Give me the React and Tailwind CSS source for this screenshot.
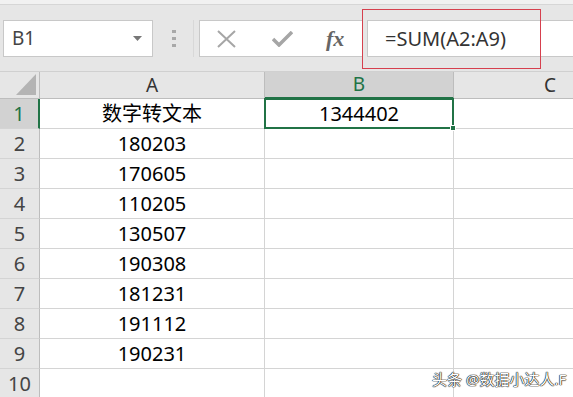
import React from 'react';

const rows = [
  '数字转文本', '180203', '170605', '110205', '130507',
  '190308', '181231', '191112', '190231', '',
];

const font = { fontFamily: '"Noto Sans", "Noto Sans CJK SC", sans-serif' };

const App = () => {
  return (
    <div className="relative w-[573px] h-[397px] overflow-hidden bg-white" style={font}>
      {/* Formula bar */}
      <div className="h-[72px] bg-[#e6e6e6] border-b border-[#d0d0d0]">
        <div className="h-[5px] bg-[#f1f1f1] border-b border-[#d6d6d6]" />
        <div className="flex items-stretch h-[37px] mt-[15px]">
          <div className="ml-[3px] w-[150px] bg-white border border-[#c8c8c8] flex items-center justify-between pl-[8px] pr-[10px]">
            <span className="text-[19px] text-[#444]">B1</span>
            <svg width="9" height="5" viewBox="0 0 9 5"><path d="M0 0h9L4.5 5z" fill="#777" /></svg>
          </div>
          <div className="w-[46px] flex items-center">
            <div className="ml-[19px] flex flex-col gap-[4px]">
              <div className="w-[4px] h-[3px] bg-[#a8a8a8]" />
              <div className="w-[4px] h-[3px] bg-[#a8a8a8]" />
              <div className="w-[4px] h-[3px] bg-[#a8a8a8]" />
            </div>
            <div className="ml-auto mr-[5px] w-px h-[37px] bg-[#d8d8d8]" />
          </div>
          <div className="w-[164px] bg-white border border-[#c8c8c8] flex items-center">
            <svg className="ml-[17px]" width="19" height="18" viewBox="0 0 19 18">
              <path d="M1 1L18 17M18 1L1 17" stroke="#a6a6a6" strokeWidth="2" />
            </svg>
            <svg className="ml-[36px]" width="21" height="16" viewBox="0 0 21 16">
              <path d="M1 8l6 6L20 1" stroke="#a6a6a6" strokeWidth="3.5" fill="none" />
            </svg>
            <span
              className="ml-[33px] text-[22px] italic font-bold text-[#666] leading-none"
              style={{ fontFamily: '"Liberation Serif", "DejaVu Serif", serif' }}
            >
              fx
            </span>
          </div>
          <div className="ml-[4px] flex-1 bg-white border border-[#c8c8c8] border-r-0 flex items-center pl-[17px]">
            <span className="text-[20px] text-[#333]">=SUM(A2:A9)</span>
          </div>
        </div>
      </div>

      {/* Sheet grid */}
      <div className="grid grid-cols-[40px_225px_189px_1fr] grid-rows-[27px_repeat(10,30px)]">
        <div className="bg-[#e6e6e6] border-r border-b border-[#bdbdbd] flex items-end justify-end pr-[3px] pb-[3px]">
          <svg width="20" height="21" viewBox="0 0 20 21"><path d="M20 0V21H0z" fill="#b4b4b4" /></svg>
        </div>
        <div className="bg-[#e6e6e6] border-r border-b border-[#bdbdbd] flex items-center justify-center text-[19px] text-[#333]">A</div>
        <div className="bg-[#d2d2d2] border-r border-[#bdbdbd] border-b-2 border-b-[#217346] flex items-center justify-center text-[19px] text-[#217346]">B</div>
        <div className="bg-[#e6e6e6] border-b border-[#bdbdbd] flex items-center justify-end pr-[17px] text-[19px] text-[#333]">C</div>

        {rows.map((v, i) => (
          <React.Fragment key={i}>
            <div
              className={`border-b border-[#d4d4d4] flex items-center justify-center text-[20px] ${
                i === 0
                  ? 'bg-[#d2d2d2] text-[#217346] border-r-2 border-r-[#217346]'
                  : 'bg-[#e6e6e6] text-[#444] border-r border-r-[#bdbdbd]'
              }`}
            >
              {i + 1}
            </div>
            <div className="border-r border-b border-[#d4d4d4] flex items-center justify-center text-[20px] text-black">
              {v}
            </div>
            {i === 0 ? (
              <div className="relative -ml-px -mt-px h-[31px] border-2 border-[#217346] flex items-center justify-center text-[20px] text-black">
                1344402
                <div className="absolute -right-[4px] -bottom-[4px] w-[6px] h-[6px] bg-[#217346] border border-white" />
              </div>
            ) : (
              <div className="border-r border-b border-[#d4d4d4]" />
            )}
            <div className="border-b border-[#d4d4d4]" />
          </React.Fragment>
        ))}
      </div>

      {/* annotation box */}
      <div className="absolute left-[362px] top-[9px] w-[179px] h-[60px] border border-[#d6404e]" />

      {/* watermark */}
      <div
        className="absolute left-[432px] top-[368px] text-[15px] text-white"
        style={{ textShadow: '0 0 1px #000, 0 0 1px #000, 0 0 1px #000' }}
      >
        头条 @数据小达人.F
      </div>
    </div>
  );
};

export default App;
